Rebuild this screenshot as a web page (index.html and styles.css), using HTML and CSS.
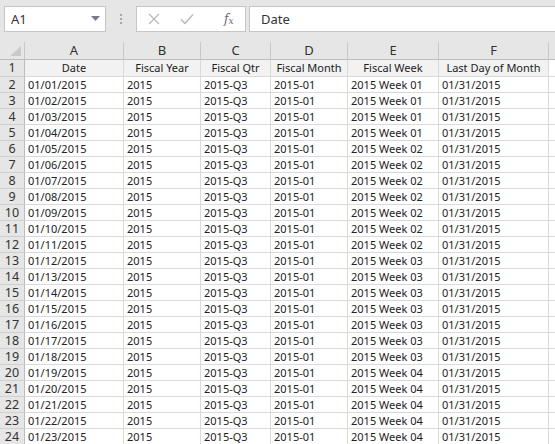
FILE: index.html
```html
<!DOCTYPE html>
<html lang="en">
<head>
    <meta charset="UTF-8">
    <title>Fiscal Calendar</title>
    <link rel="stylesheet" href="styles.css">
</head>
<body>
    <div class="formula-bar">
        <div class="name-box">
            <span>A1</span>
            <svg class="drop" width="9" height="6" viewBox="0 0 9 6"><path d="M0 0h9L4.5 5z" fill="#7c7888"/></svg>
        </div>
        <div class="dots"><i></i><i></i><i></i></div>
        <div class="fx-box">
            <svg class="icon" width="12" height="12" viewBox="0 0 12 12"><path d="M1 1l10 10M11 1L1 11" stroke="#b8b8b8" stroke-width="1.3" fill="none"/></svg>
            <svg class="icon" width="14" height="12" viewBox="0 0 14 12"><path d="M1 6.5l4 4L13 1.5" stroke="#b8b8b8" stroke-width="1.4" fill="none"/></svg>
            <span class="fx">f<sub>x</sub></span>
        </div>
        <div class="formula-input">Date</div>
    </div>

    <div class="sheet">
        <div class="row col-heads">
            <div class="cell rh corner">
                <svg width="24" height="17" viewBox="0 0 24 17"><path d="M21 4v10H10z" fill="#c9c9c9"/></svg>
            </div>
            <div class="cell a">A</div>
            <div class="cell b">B</div>
            <div class="cell c">C</div>
            <div class="cell d">D</div>
            <div class="cell e">E</div>
            <div class="cell f">F</div>
            <div class="cell g"></div>
        </div>
        <div class="row titles">
            <div class="cell rh">1</div>
            <div class="cell a">Date</div>
            <div class="cell b">Fiscal Year</div>
            <div class="cell c">Fiscal Qtr</div>
            <div class="cell d">Fiscal Month</div>
            <div class="cell e">Fiscal Week</div>
            <div class="cell f">Last Day of Month</div>
            <div class="cell g"></div>
        </div>
        <div class="row"><div class="cell rh">2</div><div class="cell a">01/01/2015</div><div class="cell b">2015</div><div class="cell c">2015-Q3</div><div class="cell d">2015-01</div><div class="cell e">2015 Week 01</div><div class="cell f">01/31/2015</div><div class="cell g"></div></div>
        <div class="row"><div class="cell rh">3</div><div class="cell a">01/02/2015</div><div class="cell b">2015</div><div class="cell c">2015-Q3</div><div class="cell d">2015-01</div><div class="cell e">2015 Week 01</div><div class="cell f">01/31/2015</div><div class="cell g"></div></div>
        <div class="row"><div class="cell rh">4</div><div class="cell a">01/03/2015</div><div class="cell b">2015</div><div class="cell c">2015-Q3</div><div class="cell d">2015-01</div><div class="cell e">2015 Week 01</div><div class="cell f">01/31/2015</div><div class="cell g"></div></div>
        <div class="row"><div class="cell rh">5</div><div class="cell a">01/04/2015</div><div class="cell b">2015</div><div class="cell c">2015-Q3</div><div class="cell d">2015-01</div><div class="cell e">2015 Week 01</div><div class="cell f">01/31/2015</div><div class="cell g"></div></div>
        <div class="row"><div class="cell rh">6</div><div class="cell a">01/05/2015</div><div class="cell b">2015</div><div class="cell c">2015-Q3</div><div class="cell d">2015-01</div><div class="cell e">2015 Week 02</div><div class="cell f">01/31/2015</div><div class="cell g"></div></div>
        <div class="row"><div class="cell rh">7</div><div class="cell a">01/06/2015</div><div class="cell b">2015</div><div class="cell c">2015-Q3</div><div class="cell d">2015-01</div><div class="cell e">2015 Week 02</div><div class="cell f">01/31/2015</div><div class="cell g"></div></div>
        <div class="row"><div class="cell rh">8</div><div class="cell a">01/07/2015</div><div class="cell b">2015</div><div class="cell c">2015-Q3</div><div class="cell d">2015-01</div><div class="cell e">2015 Week 02</div><div class="cell f">01/31/2015</div><div class="cell g"></div></div>
        <div class="row"><div class="cell rh">9</div><div class="cell a">01/08/2015</div><div class="cell b">2015</div><div class="cell c">2015-Q3</div><div class="cell d">2015-01</div><div class="cell e">2015 Week 02</div><div class="cell f">01/31/2015</div><div class="cell g"></div></div>
        <div class="row"><div class="cell rh">10</div><div class="cell a">01/09/2015</div><div class="cell b">2015</div><div class="cell c">2015-Q3</div><div class="cell d">2015-01</div><div class="cell e">2015 Week 02</div><div class="cell f">01/31/2015</div><div class="cell g"></div></div>
        <div class="row"><div class="cell rh">11</div><div class="cell a">01/10/2015</div><div class="cell b">2015</div><div class="cell c">2015-Q3</div><div class="cell d">2015-01</div><div class="cell e">2015 Week 02</div><div class="cell f">01/31/2015</div><div class="cell g"></div></div>
        <div class="row"><div class="cell rh">12</div><div class="cell a">01/11/2015</div><div class="cell b">2015</div><div class="cell c">2015-Q3</div><div class="cell d">2015-01</div><div class="cell e">2015 Week 02</div><div class="cell f">01/31/2015</div><div class="cell g"></div></div>
        <div class="row"><div class="cell rh">13</div><div class="cell a">01/12/2015</div><div class="cell b">2015</div><div class="cell c">2015-Q3</div><div class="cell d">2015-01</div><div class="cell e">2015 Week 03</div><div class="cell f">01/31/2015</div><div class="cell g"></div></div>
        <div class="row"><div class="cell rh">14</div><div class="cell a">01/13/2015</div><div class="cell b">2015</div><div class="cell c">2015-Q3</div><div class="cell d">2015-01</div><div class="cell e">2015 Week 03</div><div class="cell f">01/31/2015</div><div class="cell g"></div></div>
        <div class="row"><div class="cell rh">15</div><div class="cell a">01/14/2015</div><div class="cell b">2015</div><div class="cell c">2015-Q3</div><div class="cell d">2015-01</div><div class="cell e">2015 Week 03</div><div class="cell f">01/31/2015</div><div class="cell g"></div></div>
        <div class="row"><div class="cell rh">16</div><div class="cell a">01/15/2015</div><div class="cell b">2015</div><div class="cell c">2015-Q3</div><div class="cell d">2015-01</div><div class="cell e">2015 Week 03</div><div class="cell f">01/31/2015</div><div class="cell g"></div></div>
        <div class="row"><div class="cell rh">17</div><div class="cell a">01/16/2015</div><div class="cell b">2015</div><div class="cell c">2015-Q3</div><div class="cell d">2015-01</div><div class="cell e">2015 Week 03</div><div class="cell f">01/31/2015</div><div class="cell g"></div></div>
        <div class="row"><div class="cell rh">18</div><div class="cell a">01/17/2015</div><div class="cell b">2015</div><div class="cell c">2015-Q3</div><div class="cell d">2015-01</div><div class="cell e">2015 Week 03</div><div class="cell f">01/31/2015</div><div class="cell g"></div></div>
        <div class="row"><div class="cell rh">19</div><div class="cell a">01/18/2015</div><div class="cell b">2015</div><div class="cell c">2015-Q3</div><div class="cell d">2015-01</div><div class="cell e">2015 Week 03</div><div class="cell f">01/31/2015</div><div class="cell g"></div></div>
        <div class="row"><div class="cell rh">20</div><div class="cell a">01/19/2015</div><div class="cell b">2015</div><div class="cell c">2015-Q3</div><div class="cell d">2015-01</div><div class="cell e">2015 Week 04</div><div class="cell f">01/31/2015</div><div class="cell g"></div></div>
        <div class="row"><div class="cell rh">21</div><div class="cell a">01/20/2015</div><div class="cell b">2015</div><div class="cell c">2015-Q3</div><div class="cell d">2015-01</div><div class="cell e">2015 Week 04</div><div class="cell f">01/31/2015</div><div class="cell g"></div></div>
        <div class="row"><div class="cell rh">22</div><div class="cell a">01/21/2015</div><div class="cell b">2015</div><div class="cell c">2015-Q3</div><div class="cell d">2015-01</div><div class="cell e">2015 Week 04</div><div class="cell f">01/31/2015</div><div class="cell g"></div></div>
        <div class="row"><div class="cell rh">23</div><div class="cell a">01/22/2015</div><div class="cell b">2015</div><div class="cell c">2015-Q3</div><div class="cell d">2015-01</div><div class="cell e">2015 Week 04</div><div class="cell f">01/31/2015</div><div class="cell g"></div></div>
        <div class="row"><div class="cell rh">24</div><div class="cell a">01/23/2015</div><div class="cell b">2015</div><div class="cell c">2015-Q3</div><div class="cell d">2015-01</div><div class="cell e">2015 Week 04</div><div class="cell f">01/31/2015</div><div class="cell g"></div></div>
    </div>
</body>
</html>
```

FILE: styles.css
```css
/* General */
body {
    margin: 0;
    font-family: 'Noto Sans', sans-serif;
    background: #ffffff;
    color: #222;
    overflow: hidden;
}

/* Formula bar */
.formula-bar {
    height: 42px;
    box-sizing: border-box;
    display: flex;
    align-items: flex-start;
    padding: 6px 0 0 4px;
    background: #e6e6e6;
}
.name-box {
    width: 102px;
    height: 26px;
    box-sizing: border-box;
    border: 1px solid #c6c6c6;
    background: #fff;
    display: flex;
    align-items: center;
    justify-content: space-between;
    padding: 0 5px 0 6px;
    font-size: 13px;
    color: #333;
}
.dots {
    width: 30px;
    height: 26px;
    display: flex;
    flex-direction: column;
    align-items: center;
    justify-content: center;
    gap: 2px;
}
.dots i {
    width: 2px;
    height: 2px;
    background: #a8a8a8;
}
.fx-box {
    width: 110px;
    height: 26px;
    box-sizing: border-box;
    border: 1px solid #c6c6c6;
    background: #fff;
    display: flex;
    align-items: center;
    padding: 0 0 0 11px;
    gap: 20px;
}
.fx {
    font-family: 'DejaVu Serif', serif;
    font-style: italic;
    font-size: 12px;
    color: #6a6878;
    margin-left: 10px;
}
.fx sub {
    font-size: 9px;
    vertical-align: -1px;
}
.formula-input {
    flex: 1;
    height: 26px;
    box-sizing: border-box;
    margin-left: 3px;
    border: 1px solid #c6c6c6;
    border-right: none;
    background: #fff;
    padding: 3px 0 0 11px;
    font-size: 13px;
    color: #333;
}

/* Sheet grid */
.sheet {
    width: 555px;
}
.row {
    display: flex;
    height: 16px;
}
.cell {
    box-sizing: border-box;
    flex: 0 0 auto;
    height: 100%;
    border-right: 1px solid #dadada;
    border-bottom: 1px solid #dadada;
    padding: 0 3px;
    font-size: 11px;
    line-height: 15px;
    white-space: nowrap;
}
.rh {
    width: 25px;
    padding: 0;
    background: #e6e6e6;
    border-right-color: #bdbdbd;
    border-bottom-color: #cfcfcf;
    text-align: center;
    font-size: 12.5px;
    color: #333;
}
.a { width: 99px; }
.b { width: 77px; }
.c { width: 70px; }
.d { width: 77px; }
.e { width: 91px; }
.f { width: 110px; }
.g { width: 20px; border-right: none; }

.col-heads {
    height: 18px;
}
.col-heads .cell {
    background: #e6e6e6;
    border-right-color: #c8c8c8;
    border-bottom-color: #bdbdbd;
    text-align: center;
    font-size: 13px;
    line-height: 17px;
    color: #333;
}
.corner {
    padding: 0;
}
.corner svg {
    display: block;
}

.titles {
    height: 17px;
}
.titles .cell {
    background: #f2f2f2;
    text-align: center;
    line-height: 16px;
}
.titles .rh {
    background: #e6e6e6;
}
.titles .g {
    background: #fff;
}
```
